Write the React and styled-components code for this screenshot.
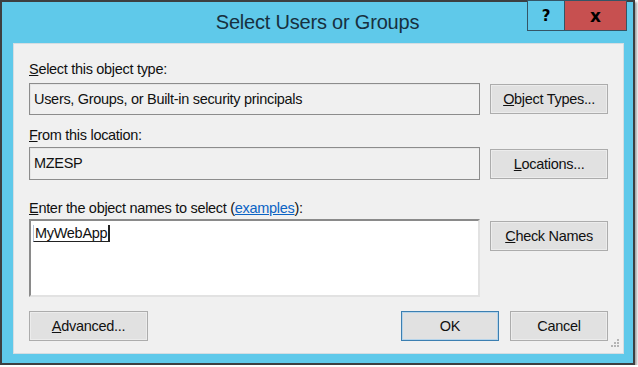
import React from 'react';
import styled, { createGlobalStyle } from 'styled-components';

const GlobalStyle = createGlobalStyle`
  html, body {
    margin: 0;
    padding: 0;
    background: #ffffff;
  }
  body {
    font-family: 'Liberation Sans', Arial, sans-serif;
  }
`;

const Window = styled.div`
  box-sizing: border-box;
  width: 635px;
  height: 365px;
  border: 2px solid #3d3f41;
  background: #5fc9ea;
  box-shadow: 2px 2px 2px rgba(0, 0, 0, 0.35);
  display: flex;
  flex-direction: column;
`;

const TitleBar = styled.div`
  height: 41px;
  display: flex;
  align-items: flex-start;
  position: relative;
`;

const Title = styled.div`
  flex: 1;
  text-align: center;
  font-size: 20px;
  line-height: 24px;
  padding-top: 8px;
  color: #17303f;
  letter-spacing: -0.2px;
`;

const Caption = styled.div`
  position: absolute;
  top: -2px;
  right: 6px;
  display: flex;
`;

const CaptionButton = styled.div`
  box-sizing: border-box;
  width: ${(p) => p.$w}px;
  height: 31px;
  border: 1px solid #345566;
  border-left-width: ${(p) => (p.$first ? 1 : 0)}px;
  background: ${(p) => p.$bg};
  display: flex;
  align-items: center;
  justify-content: center;
  font-family: 'DejaVu Sans', sans-serif;
  font-weight: bold;
  font-size: ${(p) => p.$size}px;
  color: #000;
`;

const Client = styled.div`
  flex: 1;
  margin: 0 9px 9px 11px;
  background: #f0f0f0;
  border: 1px solid #d4dde2;
  padding: 17px 15px 12px 15px;
  display: flex;
  flex-direction: column;
  position: relative;
  font-size: 14.5px;
  color: #111;
`;

const Label = styled.div`
  line-height: 16px;
  height: 16px;
  margin-top: ${(p) => p.$top || 0}px;
  margin-bottom: ${(p) => p.$bottom || 0}px;
  letter-spacing: -0.3px;
`;

const Key = styled.span`
  text-decoration: underline;
`;

const Link = styled.span`
  color: #0b63c4;
  text-decoration: underline;
`;

const Row = styled.div`
  display: flex;
  gap: 10px;
  align-items: ${(p) => p.$align || 'center'};
`;

const TextBox = styled.div`
  box-sizing: border-box;
  width: 452px;
  height: ${(p) => p.$h}px;
  border: 1px solid #8c8c8c;
  box-shadow: inset 1px 1px 0 #e6e6e6;
  background: #f0f0f0;
  padding: 6px 4px 0;
  line-height: 18px;
  letter-spacing: -0.3px;
`;

const TextArea = styled.div`
  box-sizing: border-box;
  width: 452px;
  height: 78px;
  background: #ffffff;
  border-top: 2px solid #8a8a8a;
  border-left: 2px solid #8a8a8a;
  border-right: 2px solid #e2e2e2;
  border-bottom: 2px solid #e2e2e2;
  padding: 4px 2px;
  letter-spacing: -0.3px;
`;

const Resolved = styled.span`
  display: inline-block;
  line-height: 16px;
  padding: 0 1px;
  border-bottom: 1px solid #222;
  border-right: 2px solid #222;
  border-left: 1px solid #b8c4d8;
`;

const Button = styled.div`
  box-sizing: border-box;
  width: ${(p) => p.$w || 118}px;
  height: 30px;
  margin-top: ${(p) => p.$top || 0}px;
  background: #e1e1e1;
  border: 1px solid ${(p) => (p.$default ? '#3c7fb1' : '#acacac')};
  box-shadow: inset 0 0 0 1px ${(p) => (p.$default ? '#b6d4ea' : '#ececec')};
  display: flex;
  align-items: center;
  justify-content: center;
  letter-spacing: -0.3px;
  color: #111;
`;

const Footer = styled.div`
  margin-top: 14px;
  display: flex;
  align-items: center;
  gap: 11px;
`;

const Spacer = styled.div`
  flex: 1;
`;

const Grip = styled.svg`
  position: absolute;
  right: 3px;
  bottom: 3px;
`;

const App = () => (
  <>
    <GlobalStyle />
    <Window>
      <TitleBar>
        <Title>Select Users or Groups</Title>
        <Caption>
          <CaptionButton $w={38} $bg="#5fc9ea" $size={15} $first>?</CaptionButton>
          <CaptionButton $w={62} $bg="#c75050" $size={17}>x</CaptionButton>
        </Caption>
      </TitleBar>
      <Client>
        <Label $bottom={6}><Key>S</Key>elect this object type:</Label>
        <Row>
          <TextBox $h={32}>Users, Groups, or Built-in security principals</TextBox>
          <Button><Key>O</Key>bject Types...</Button>
        </Row>
        <Label $top={12} $bottom={4}><Key>F</Key>rom this location:</Label>
        <Row>
          <TextBox $h={33}>MZESP</TextBox>
          <Button><Key>L</Key>ocations...</Button>
        </Row>
        <Label $top={20} $bottom={3}><Key>E</Key>nter the object names to select (<Link>examples</Link>):</Label>
        <Row $align="flex-start">
          <TextArea><Resolved>MyWebApp</Resolved></TextArea>
          <Button $top={2}><Key>C</Key>heck Names</Button>
        </Row>
        <Footer>
          <Button $w={119}><Key>A</Key>dvanced...</Button>
          <Spacer />
          <Button $w={98} $default>OK</Button>
          <Button $w={98}>Cancel</Button>
        </Footer>
        <Grip width="12" height="12" viewBox="0 0 12 12">
          {[[9, 1], [6, 4], [9, 4], [3, 7], [6, 7], [9, 7]].map(([x, y]) => (
            <rect key={`${x}-${y}`} x={x} y={y} width="2" height="2" fill="#b4b4b4" />
          ))}
        </Grip>
      </Client>
    </Window>
  </>
);

export default App;
